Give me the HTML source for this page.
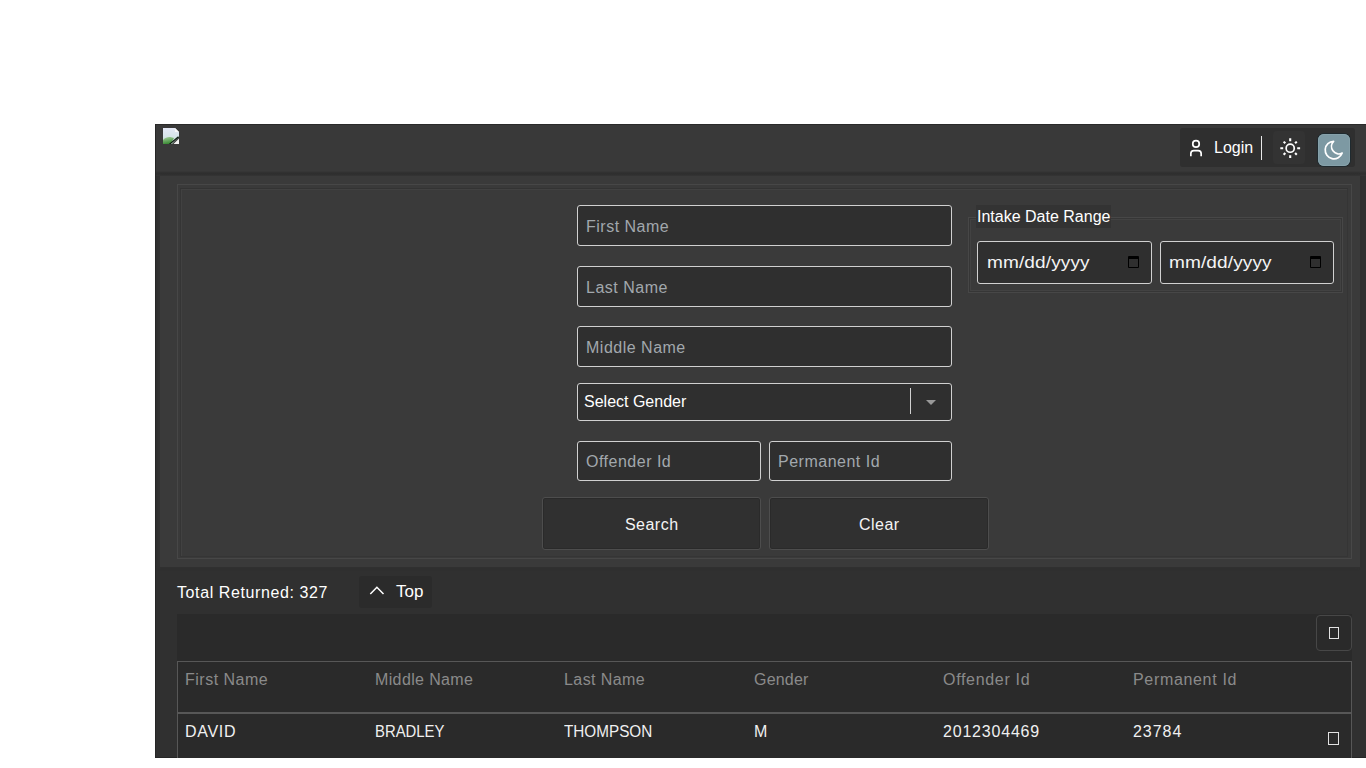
<!DOCTYPE html>
<html>
<head>
<meta charset="utf-8">
<style>
*{box-sizing:border-box;margin:0;padding:0}
html,body{width:1366px;height:768px;overflow:hidden;background:#fff;font-family:"Liberation Sans",sans-serif}
.a{position:absolute}
svg{display:block}
#panel{left:155px;top:124px;width:1211px;height:634px;background:#303030;border-bottom:1px solid #262626;border-left:1px solid #262626}
#hdr{left:156px;top:124px;width:1210px;height:48px;background:#393939;border-top:1px solid #2a2a2a}
#band{left:156px;top:171px;width:1210px;height:5px;background:linear-gradient(#383838,#303030 40%,#2f2f2f 60%,#363636)}
#content{left:160px;top:176px;width:1200px;height:391px;background:#3a3a3a;box-shadow:-2px 0 3px #333}
#form{left:177px;top:184px;width:1175px;height:375px;border:1px solid #474747}
.inp{border:1px solid #d0d0d0;border-radius:3px;background:#2f2f2f;height:41px}
.ph{position:absolute;left:8px;top:1px;line-height:39px;font-size:16px;color:#a2a8ad;white-space:nowrap;letter-spacing:.5px}
.btn{background:#303030;border:1px solid #4d4d4d;box-shadow:inset 0 0 0 1px #2a2a2a;border-radius:3px;color:#f4f4f4;font-size:16px;text-align:center;line-height:53px;letter-spacing:.5px;text-indent:.5px}
.txt{white-space:nowrap;line-height:1}
</style>
</head>
<body>
<div id="panel" class="a"></div>
<div id="hdr" class="a"></div>
<div id="band" class="a"></div>
<div id="content" class="a"></div>
<div id="form" class="a"></div>
<div class="a" style="left:180px;top:188px;width:1168px;height:369px;border:1px solid #353535;border-top-color:#333;box-shadow:inset 1px 1px 0 #414141"></div>

<!-- broken image icon -->
<div class="a" style="left:163px;top:128px;width:16px;height:16px">
<svg width="16" height="16" viewBox="0 0 16 16"><defs><linearGradient id="g1" x1="0" y1="0" x2="0" y2="1"><stop offset="0" stop-color="#e4e8f6"/><stop offset=".55" stop-color="#d6e4e8"/><stop offset="1" stop-color="#b8d4c0"/></linearGradient>
<linearGradient id="g2" x1="0" y1="0" x2=".3" y2="1"><stop offset="0" stop-color="#a8d0a0"/><stop offset="1" stop-color="#3a8a34"/></linearGradient></defs>
<path d="M0 0h12l4 4v4.5L9 16H0z" fill="url(#g1)"/>
<path d="M12 0v4h4z" fill="#f8f8f8"/>
<path d="M0 16V12c3-3 6-3.5 9-2.5l2 .5L7.5 16z" fill="url(#g2)"/>
<path d="M6.5 16.2L15.5 8.8" stroke="#0c1a10" stroke-width="1.3"/>
<path d="M10.5 16l5.5-5.5V16z" fill="#f2f2f2"/>
</svg>
</div>
<!-- header right controls -->
<div class="a" style="left:1180px;top:128px;width:175px;height:39px;background:#2f2f2f;border-radius:3px"></div>
<div class="a" style="left:1189px;top:139px">
<svg width="15" height="19" viewBox="0 0 15 19"><circle cx="7" cy="4.95" r="3.25" fill="none" stroke="#fff" stroke-width="1.7"/><path d="M1.85 17.2V14.6Q1.85 11.55 4.9 11.55H9.1Q12.15 11.55 12.15 14.6V17.2" fill="none" stroke="#fff" stroke-width="1.7"/></svg>
</div>
<div class="a txt" style="left:1214px;top:140px;font-size:16px;color:#fff">Login</div>
<div class="a" style="left:1261px;top:136px;width:1px;height:24px;background:#e8e8e8"></div>
<div class="a" style="left:1273px;top:131px;width:32px;height:33px;background:#333;border-radius:4px"></div>
<div class="a" style="left:1279.8px;top:137.8px">
<svg width="21" height="21" viewBox="0 0 21 21"><circle cx="10.2" cy="10.2" r="4.05" fill="none" stroke="#fff" stroke-width="1.7"/><path d="M17.20 10.20L20.10 10.20M15.08 15.08L16.78 16.78M10.20 17.20L10.20 20.10M5.32 15.08L3.62 16.78M3.20 10.20L0.30 10.20M5.32 5.32L3.62 3.62M10.20 3.20L10.20 0.30M15.08 5.32L16.78 3.62" stroke="#fff" stroke-width="2.1"/></svg>
</div>
<div class="a" style="left:1318px;top:134px;width:32px;height:32px;background:#7d99a3;border-radius:6px;box-shadow:0 0 0 1px #1f2a2f,inset 0 0 0 1px #86a1aa"></div>
<div class="a" style="left:1322px;top:138px">
<svg width="24" height="24" viewBox="0 0 24 24"><path d="M11.6 3.3A8.75 8.75 0 1 0 20.2 15A7.36 7.36 0 0 1 11.6 3.3z" fill="none" stroke="#fff" stroke-width="1.7" stroke-linejoin="round"/></svg>
</div>

<!-- form inputs -->
<div class="a inp" style="left:577px;top:205px;width:375px"><span class="ph">First Name</span></div>
<div class="a inp" style="left:577px;top:266px;width:375px"><span class="ph">Last Name</span></div>
<div class="a inp" style="left:577px;top:326px;width:375px"><span class="ph">Middle Name</span></div>
<div class="a inp" style="left:577px;top:383px;width:375px;height:38px"><span class="ph" style="left:6px;top:0;line-height:36px;color:#fff;letter-spacing:0">Select Gender</span>
<div class="a" style="left:332px;top:4px;width:1px;height:26px;background:#d0d0d0"></div>
<div class="a" style="left:348px;top:16px;width:0;height:0;border-left:5px solid transparent;border-right:5px solid transparent;border-top:5px solid #999"></div>
</div>
<div class="a inp" style="left:577px;top:441px;width:184px;height:40px"><span class="ph" style="line-height:38px">Offender Id</span></div>
<div class="a inp" style="left:769px;top:441px;width:183px;height:40px"><span class="ph" style="line-height:38px">Permanent Id</span></div>

<div class="a btn" style="left:542px;top:497px;width:219px;height:53px">Search</div>
<div class="a btn" style="left:769px;top:497px;width:220px;height:53px">Clear</div>

<!-- date range -->
<div class="a" style="left:968px;top:217px;width:375px;height:76px;border:1px solid #474747;box-shadow:inset 0 0 0 1px #363636,inset 0 0 0 2px #424242"></div>
<div class="a txt" style="left:976px;top:205px;width:135px;height:23px;background:#333;font-size:16px;color:#fff;line-height:23px;padding-left:1px">Intake Date Range</div>
<div class="a inp" style="left:977px;top:241px;width:175px;height:43px"><span class="ph" style="left:9px;top:0;line-height:41px;color:#f4f4f4;letter-spacing:.1px;transform:scaleX(1.19);transform-origin:0 0">mm/dd/yyyy</span>
<div class="a" style="left:150px;top:14px;width:11px;height:12px;border:1.4px solid #000;border-top-width:3px;border-bottom-width:1.6px;border-radius:1px"></div></div>
<div class="a inp" style="left:1160px;top:241px;width:174px;height:43px"><span class="ph" style="left:8px;top:0;line-height:41px;color:#f4f4f4;letter-spacing:.1px;transform:scaleX(1.19);transform-origin:0 0">mm/dd/yyyy</span>
<div class="a" style="left:149px;top:14px;width:11px;height:12px;border:1.4px solid #000;border-top-width:3px;border-bottom-width:1.6px;border-radius:1px"></div></div>

<!-- results -->
<div class="a txt" style="left:177px;top:585px;font-size:16px;color:#fff;letter-spacing:.6px">Total Returned: 327</div>
<div class="a" style="left:359px;top:576px;width:73px;height:32px;background:#2b2b2b;border-radius:3px"></div>
<div class="a" style="left:369px;top:585px">
<svg width="16" height="11" viewBox="0 0 16 11"><path d="M1.3 9L7.9 2.3L14.5 9" fill="none" stroke="#fff" stroke-width="1.5"/></svg>
</div>
<div class="a txt" style="left:396px;top:583px;font-size:17px;color:#fff">Top</div>

<!-- table -->
<div class="a" style="left:177px;top:614px;width:1175px;height:47px;background:#2a2a2a"></div>
<div class="a" style="left:1316px;top:615px;width:36px;height:36px;border:1px solid #474747;border-radius:4px"></div>
<div class="a" style="left:1329px;top:627px;width:10px;height:12px;border:1px solid #e2e2e2"></div>
<div class="a" style="left:177px;top:661px;width:1175px;height:97px;background:#2a2a2a;border:1px solid #575757;border-bottom:none"></div>
<div class="a" style="left:178px;top:712px;width:1173px;height:2px;background:#575757"></div>
<div class="a" style="left:1328px;top:732px;width:11px;height:13px;border:1px solid #e2e2e2"></div>
<!-- table text -->
<div class="a txt" style="left:185px;top:672px;font-size:16px;color:#8a8a8a;letter-spacing:.5px">First Name</div>
<div class="a txt" style="left:375px;top:672px;font-size:16px;color:#8a8a8a;letter-spacing:.37px">Middle Name</div>
<div class="a txt" style="left:564px;top:672px;font-size:16px;color:#8a8a8a;letter-spacing:.42px">Last Name</div>
<div class="a txt" style="left:754px;top:672px;font-size:16px;color:#8a8a8a;letter-spacing:.2px">Gender</div>
<div class="a txt" style="left:943px;top:672px;font-size:16px;color:#8a8a8a;letter-spacing:.68px">Offender Id</div>
<div class="a txt" style="left:1133px;top:672px;font-size:16px;color:#8a8a8a;letter-spacing:.67px">Permanent Id</div>
<div class="a txt" style="left:185px;top:724px;font-size:16px;color:#f0f0f0;letter-spacing:.7px">DAVID</div>
<div class="a txt" style="left:375px;top:724px;font-size:16px;color:#f0f0f0;transform:scaleX(.93);transform-origin:0 0">BRADLEY</div>
<div class="a txt" style="left:564px;top:724px;font-size:16px;color:#f0f0f0;transform:scaleX(.955);transform-origin:0 0">THOMPSON</div>
<div class="a txt" style="left:754px;top:724px;font-size:16px;color:#f0f0f0;letter-spacing:.3px">M</div>
<div class="a txt" style="left:943px;top:724px;font-size:16px;color:#f0f0f0;letter-spacing:.8px">2012304469</div>
<div class="a txt" style="left:1133px;top:724px;font-size:16px;color:#f0f0f0;letter-spacing:.95px">23784</div>
</body>
</html>
